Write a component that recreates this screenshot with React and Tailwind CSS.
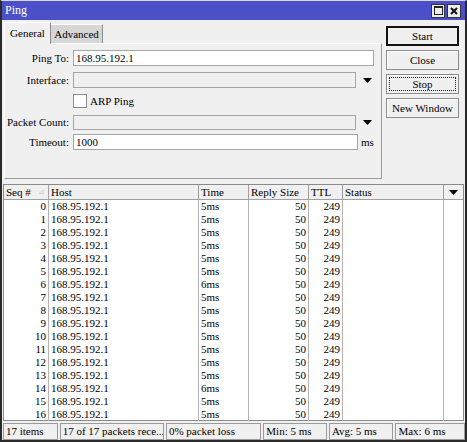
import React from "react";

const rows = Array.from({ length: 17 }, (_, i) => ({
  seq: i,
  host: "168.95.192.1",
  time: i === 6 || i === 14 ? "6ms" : "5ms",
  size: 50,
  ttl: 249,
}));

const Arrow = () => (
  <svg width="9" height="5" viewBox="0 0 9 5">
    <path d="M0 0h9L4.5 5z" fill="#000" />
  </svg>
);

const Label = ({ children }) => (
  <div className="w-[65px] text-right pr-[1px] leading-[15px]">{children}</div>
);

const Btn = ({ children, dflt, focus }) => (
  <div
    className={
      "h-[20px] w-[73px] flex items-center justify-center bg-[#f0f0f0] " +
      (dflt ? "border-2 border-[#111]" : "border border-[#8c8c8c] shadow-[inset_1px_1px_0_#fff]")
    }
  >
    {focus ? (
      <div className="w-[67px] h-[14px] border border-dotted border-[#222] flex items-center justify-center">
        {children}
      </div>
    ) : (
      children
    )}
  </div>
);

export default function App() {
  return (
    <div className="w-[467px] h-[442px] bg-[#f0f0f0] border-2 border-[#2a2a2a] border-t-[#d8d8d8] border-t-[1px] flex flex-col text-[11px] leading-[13px] text-black font-['Liberation_Serif','Times_New_Roman',serif]">
      {/* title bar */}
      <div className="h-[19px] bg-[#4c50c8] flex items-center justify-between pl-[3px] pr-[4px]">
        <span className="text-white text-[12px]">Ping</span>
        <div className="flex gap-[2px]">
          <div className="w-[14px] h-[14px] bg-[#ececec] border border-[#333] flex items-center justify-center">
            <div className="w-[9px] h-[9px] border border-[#222] border-t-2" />
          </div>
          <div className="w-[14px] h-[14px] bg-[#ececec] border border-[#333] flex items-center justify-center">
            <svg width="8" height="8" viewBox="0 0 8 8">
              <path d="M1 1l6 6M7 1l-6 6" stroke="#111" strokeWidth="2" />
            </svg>
          </div>
        </div>
      </div>

      {/* top area */}
      <div className="flex h-[161px]">
        <div className="ml-[2px] w-[378px] flex flex-col">
          <div className="flex items-end h-[23px]">
            <div className="h-[22px] w-[47px] bg-[#f0f0f0] border-t border-l border-white border-r border-r-[#8c8c8c] flex items-center justify-center relative z-10 -mb-px">
              General
            </div>
            <div className="h-[19px] w-[52px] bg-[#d6d6d6] border-t border-white border-r border-r-[#8c8c8c] flex items-center justify-center">
              Advanced
            </div>
          </div>
          <div className="h-[136px] border-t border-l border-white border-r border-b border-r-[#9a9a9a] border-b-[#9a9a9a] pt-[6px]">
            <div className="flex items-center h-[16px]">
              <Label>Ping To:</Label>
              <div className="ml-[3px] w-[301px] h-[16px] bg-white border border-[#a5a5a5] pl-[2px] leading-[14px]">
                168.95.192.1
              </div>
            </div>
            <div className="flex items-center h-[16px] mt-[6px]">
              <Label>Interface:</Label>
              <div className="ml-[3px] w-[283px] h-[16px] border border-[#a5a5a5]" />
              <div className="w-[22px] flex justify-center">
                <Arrow />
              </div>
            </div>
            <div className="flex items-center h-[14px] mt-[6px] ml-[68px]">
              <div className="w-[14px] h-[14px] bg-white border border-[#8c8c8c]" />
              <span className="ml-[3px]">ARP Ping</span>
            </div>
            <div className="flex items-center h-[15px] mt-[7px]">
              <Label>Packet Count:</Label>
              <div className="ml-[3px] w-[283px] h-[15px] border border-[#a5a5a5]" />
              <div className="w-[22px] flex justify-center">
                <Arrow />
              </div>
            </div>
            <div className="flex items-center h-[16px] mt-[4px]">
              <Label>Timeout:</Label>
              <div className="ml-[3px] w-[285px] h-[16px] bg-white border border-[#a5a5a5] pl-[2px] leading-[14px]">
                1000
              </div>
              <span className="ml-[3px]">ms</span>
            </div>
          </div>
        </div>
        <div className="ml-[4px] mt-[6px] flex flex-col gap-[4px]">
          <Btn dflt>Start</Btn>
          <Btn>Close</Btn>
          <Btn focus>Stop</Btn>
          <Btn>New Window</Btn>
        </div>
      </div>

      {/* table */}
      <div className="mx-[1px] mt-[3px] h-[237px] border border-[#8a8a8a] bg-white flex flex-col">
        <div className="grid grid-cols-[45px_150px_50px_60px_34px_101px_1fr] h-[15px] bg-[#f0f0f0] border-b border-[#a0a0a0] leading-[14px]">
          <div className="border-r border-[#a0a0a0] pl-[2px] flex items-center justify-between pr-[3px]">
            <span>Seq #</span>
            <span className="text-[#c8c8c8] text-[8px]">⊿</span>
          </div>
          <div className="border-r border-[#a0a0a0] pl-[2px]">Host</div>
          <div className="border-r border-[#a0a0a0] pl-[2px]">Time</div>
          <div className="border-r border-[#a0a0a0] pl-[2px]">Reply Size</div>
          <div className="border-r border-[#a0a0a0] pl-[2px]">TTL</div>
          <div className="border-r border-[#a0a0a0] pl-[2px]">Status</div>
          <div className="flex items-center justify-center">
            <Arrow />
          </div>
        </div>
        {rows.map((r) => (
          <div
            key={r.seq}
            className="grid grid-cols-[45px_150px_50px_60px_34px_101px_1fr] h-[13px] leading-[13px]"
          >
            <div className="border-r border-[#b4b4b4] text-right pr-[2px]">{r.seq}</div>
            <div className="border-r border-[#b4b4b4] pl-[2px]">{r.host}</div>
            <div className="border-r border-[#b4b4b4] pl-[2px]">{r.time}</div>
            <div className="border-r border-[#b4b4b4] text-right pr-[2px]">{r.size}</div>
            <div className="border-r border-[#b4b4b4] text-right pr-[2px]">{r.ttl}</div>
            <div className="border-r border-[#b4b4b4]" />
            <div />
          </div>
        ))}
      </div>

      {/* status bar */}
      <div className="flex gap-[2px] ml-[1px] mt-[2px] h-[17px] leading-[15px]">
        <div className="w-[55px] border border-[#9a9a9a] pl-[2px]">17 items</div>
        <div className="w-[105px] border border-[#9a9a9a] pl-[2px] whitespace-nowrap overflow-hidden">
          17 of 17 packets rece...
        </div>
        <div className="w-[96px] border border-[#9a9a9a] pl-[2px]">0% packet loss</div>
        <div className="w-[64px] border border-[#9a9a9a] pl-[2px]">Min: 5 ms</div>
        <div className="w-[65px] border border-[#9a9a9a] pl-[2px]">Avg: 5 ms</div>
        <div className="w-[70px] border border-[#9a9a9a] pl-[2px]">Max: 6 ms</div>
      </div>
    </div>
  );
}
